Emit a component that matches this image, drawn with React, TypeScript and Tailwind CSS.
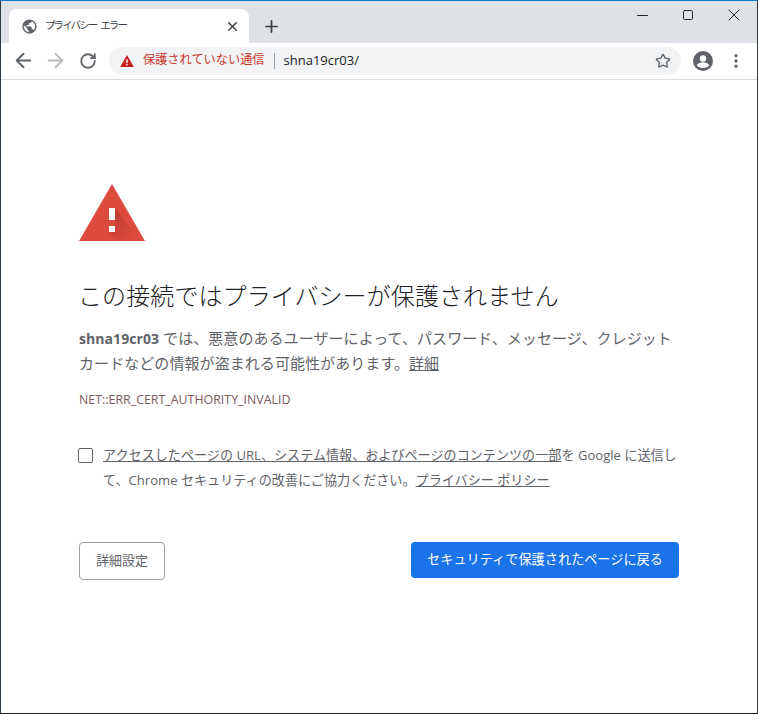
import { ArrowLeft, ArrowRight, RotateCw, Star, EllipsisVertical, X, Plus, Minus, Square } from 'lucide-react'

const font = "font-['Open_Sans','Noto_Sans_CJK_JP',sans-serif]"

function GlobeIcon() {
  return (
    <svg width="17" height="17" viewBox="0 0 24 24" fill="#5f6368">
      <path d="M12 2C6.48 2 2 6.48 2 12s4.48 10 10 10 10-4.48 10-10S17.52 2 12 2zm-1 17.93C7.05 19.44 4 16.08 4 12c0-.62.08-1.21.21-1.79L9 15v1c0 1.1.9 2 2 2v1.93zm6.9-2.54c-.26-.81-1-1.39-1.9-1.39h-1v-3c0-.55-.45-1-1-1H8v-2h2c.55 0 1-.45 1-1V7h2c1.1 0 2-.9 2-2v-.41c2.93 1.19 5 4.06 5 7.41 0 2.08-.8 3.97-2.1 5.39z" />
    </svg>
  )
}

function AccountIcon() {
  return (
    <svg width="20" height="20" viewBox="0 0 20 20" className="block">
      <circle cx="10" cy="10" r="10" fill="#5f6368" />
      <circle cx="10" cy="7.5" r="3.2" fill="#fff" />
      <path d="M3.8 14.2c1.4-2 3.8-2.9 6.2-2.9s4.800.9 6.200 2.900C15 16 12.700 17 10 17s-5-1-6.200-2.800z" fill="#fff" />
    </svg>
  )
}

function WarningLarge() {
  return (
    <svg width="66" height="57" viewBox="0 0 66 57" className="block">
      <defs>
        <linearGradient id="shade" x1="33" y1="30" x2="55" y2="55" gradientUnits="userSpaceOnUse">
          <stop offset="0" stopColor="#a8342a" stopOpacity="0.55" />
          <stop offset="1" stopColor="#a8342a" stopOpacity="0" />
        </linearGradient>
      </defs>
      <path d="M33 0 L66 57 L0 57 Z" fill="#dd4b3d" />
      <path d="M36 24 L61 57 L39 57 L30 48 L36 42 Z" fill="url(#shade)" />
      <rect x="30" y="24" width="6" height="12" fill="#fff" />
      <rect x="30" y="42" width="6" height="6" fill="#fff" />
    </svg>
  )
}

export default function App() {
  return (
    <div className={`${font} w-[758px] h-[714px] flex flex-col bg-white border-t border-t-[#0b7ad1] border-l border-l-[#2a3a46] border-r border-r-[#30363b] border-b border-b-[#1c2128] overflow-hidden`}>
      {/* Tab strip */}
      <div className="h-[42px] shrink-0 bg-[#dee1e6] flex items-end pl-2">
        <div className="w-[240px] h-[34px] bg-white rounded-t-lg flex items-center pl-[12px] pr-[9px]">
          <GlobeIcon />
          <span className="ml-[7px] text-[10.5px] tracking-[-1.9px] [word-spacing:3px] text-[#3c4043] flex-1">プライバシー エラー</span>
          <X size={15} strokeWidth={2.4} className="text-[#3c4043]" />
        </div>
        <div className="h-[34px] ml-[13px] flex items-center">
          <Plus size={19} strokeWidth={2.2} className="text-[#3c4043]" />
        </div>
        <div className="flex-1 self-start h-[28px] flex items-center justify-end">
          <Minus size={17} strokeWidth={1.2} className="text-black mr-[31px]" />
          <Square size={12} strokeWidth={1.6} className="text-black mr-[30px]" />
          <X size={20} strokeWidth={1} className="text-black mr-[13px]" />
        </div>
      </div>

      {/* Toolbar */}
      <div className="h-[37px] shrink-0 bg-white border-b border-[#dadce0] flex items-center pb-[1px]">
        <ArrowLeft size={23} strokeWidth={2} className="ml-[11px] text-[#5f6368]" />
        <ArrowRight size={23} strokeWidth={2} className="ml-[9px] text-[#babcbe]" />
        <RotateCw size={18} strokeWidth={2.4} className="ml-[12px] text-[#5f6368]" />
        <div className="ml-[12px] w-[572px] h-[28px] rounded-full bg-[#f1f3f4] flex items-center pl-[11px] pr-[10px]">
          <svg width="14" height="12" viewBox="0 0 16 14">
            <path d="M8 0 L16 14 L0 14 Z" fill="#c5221f" />
            <rect x="7.200" y="5" width="1.600" height="4.500" fill="#fff" />
            <rect x="7.200" y="10.500" width="1.600" height="1.600" fill="#fff" />
          </svg>
          <span className="ml-[9px] text-[12.2px] text-[#c9382e]">保護されていない通信</span>
          <span className="ml-[9px] w-px h-[16px] bg-[#9aa0a6]" />
          <span className="ml-[9px] text-[13px] text-[#202124]">shna19cr03/</span>
          <Star size={16} strokeWidth={2} className="ml-auto text-[#5f6368]" />
        </div>
        <div className="ml-[12px]">
          <AccountIcon />
        </div>
        <EllipsisVertical size={18} strokeWidth={2.4} className="ml-[14px] text-[#5f6368]" />
      </div>

      {/* Interstitial */}
      <div className="flex-1 pl-[78px] pt-[104px]">
        <WarningLarge />
        <h1 className="mt-[37px] -ml-px text-[24px] tracking-[0.1px] leading-[36px] font-light text-[#202124]">この接続ではプライバシーが保護されません</h1>
        <p className="mt-[12px] w-[600px] text-[15px] tracking-[0.07px] leading-[25px] text-[#5f6368]">
          <strong className="font-bold text-[14px]">shna19cr03</strong> では、悪意のあるユーザーによって、パスワード、メッセージ、クレジットカードなどの情報が盗まれる可能性があります。<span className="underline">詳細</span>
        </p>
        <div className="mt-[13px] text-[12.4px] leading-[22px] text-[#7b5b5b]">NET::ERR_CERT_AUTHORITY_INVALID</div>
        <div className="mt-[32px] -ml-px flex w-[601px]">
          <div className="mt-[5px] w-[15px] h-[15px] shrink-0 border border-[#5f6368] rounded-[2px]" />
          <p className="ml-[10px] text-[13.1px] leading-[25px] text-[#5f6368]">
            <span className="underline">アクセスしたページの URL、システム情報、およびページのコンテンツの一部</span>を Google に送信して、Chrome セキュリティの改善にご協力ください。<span className="underline">プライバシー ポリシー</span>
          </p>
        </div>
        <div className="mt-[49px] flex justify-between items-start w-[600px]">
          <button className="w-[86px] h-[38px] border border-[#9aa0a6] rounded-[4px] text-[13px] text-[#5f6368] bg-white">詳細設定</button>
          <button className="w-[268px] h-[36px] rounded-[4px] bg-[#1a73e8] text-[13.17px] text-white">セキュリティで保護されたページに戻る</button>
        </div>
      </div>
    </div>
  )
}
